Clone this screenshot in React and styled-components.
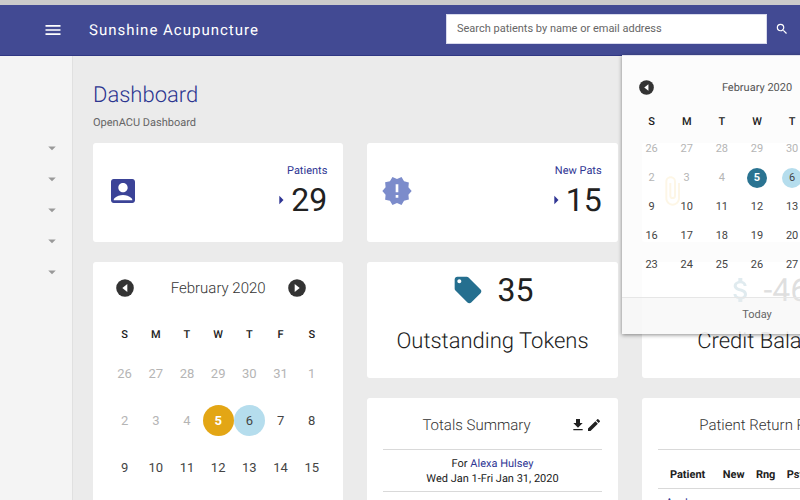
import React from "react";
import styled, { createGlobalStyle, css } from "styled-components";
import {
  MdAccountBox,
  MdArrowDropDown,
  MdArrowRight,
  MdAttachFile,
  MdAttachMoney,
  MdEdit,
  MdFileDownload,
  MdLocalOffer,
  MdMenu,
  MdNewReleases,
  MdSearch,
} from "react-icons/md";

const GlobalStyle = createGlobalStyle`
  * {
    box-sizing: border-box;
  }

  body {
    margin: 0;
    background: #ebebeb;
    color: #212121;
    font-family: Roboto, "Liberation Sans", sans-serif;
    font-size: 11px;
    text-rendering: geometricPrecision;
  }

  button {
    padding: 0;
    border: 0;
    background: none;
    color: inherit;
    font: inherit;
    cursor: pointer;
  }

  a {
    color: #303694;
    text-decoration: none;
  }

  svg {
    display: block;
  }
`;

const Viewport = styled.div`
  height: 100vh;
  overflow: hidden;
`;

const Page = styled.div`
  display: flex;
  flex-direction: column;
  min-width: 912px;
  min-height: 100%;
`;

const TopBar = styled.header`
  position: relative;
  z-index: 1;
  display: flex;
  align-items: center;
  height: 56px;
  padding-left: 43px;
  border-top: 5px solid #cbcbcb;
  border-bottom: 1px solid #303783;
  background: #424a93;
  color: #fff;
`;

const Brand = styled.div`
  flex: 0 0 357px;
  margin-left: 26px;
  font-size: 15px;
  letter-spacing: 1px;
`;

const SearchForm = styled.form`
  display: flex;
  align-items: center;
  gap: 8px;
  padding-bottom: 2px;
`;

const SearchInput = styled.input`
  width: 321px;
  height: 30px;
  margin: 0;
  padding: 0 10px 2px;
  border: 1px solid #d8daec;
  background: #fff;
  font-family: inherit;
  font-size: 11px;

  &::placeholder {
    color: #666;
  }
`;

const Body = styled.div`
  display: flex;
  flex: 1;
`;

const Sidebar = styled.nav`
  display: flex;
  flex: 0 0 73px;
  flex-direction: column;
  align-items: flex-end;
  padding: 76px 11px 0 0;
  border-right: 1px solid #e0e0e0;
  background: #f4f4f4;
  color: #999;
`;

const SidebarToggle = styled.button`
  display: flex;
  align-items: center;
  height: 31px;
`;

const Main = styled.main`
  flex: 1;
  padding: 24px 20px 0;
`;

const Title = styled.h1`
  margin: 0;
  color: #2c3590;
  font-size: 22px;
  font-weight: 300;
  line-height: 32px;
`;

const Subtitle = styled.p`
  margin: 3px 0 12px;
  color: #666;
  line-height: 16px;
`;

const Grid = styled.div`
  display: grid;
  grid-template-columns: repeat(3, minmax(250px, 1fr));
  grid-template-rows: 99px 116px auto;
  column-gap: 24px;
  row-gap: 20px;
`;

const Card = styled.section`
  border-radius: 3px;
  background: #fff;
`;

const StatCard = styled(Card)`
  display: flex;
  align-items: center;
  justify-content: space-between;
  padding: 0 16px 4px 14px;
`;

const StatIcon = styled.span`
  color: ${(p) => p.$color};
`;

const StatInfo = styled.div`
  padding-bottom: 2px;
  color: #303694;
  text-align: right;
`;

const StatLabel = styled.a`
  display: block;
  line-height: 20px;
`;

const StatValue = styled.div`
  display: flex;
  align-items: center;
  justify-content: flex-end;
  line-height: 38px;
`;

const BigNumber = styled.span`
  color: #212121;
  font-size: 32px;
`;

const TotalCard = styled(Card)`
  padding-top: 8px;
  text-align: center;
`;

const TotalValue = styled.div`
  display: flex;
  align-items: center;
  justify-content: center;
  gap: ${(p) => p.$gap}px;
  color: #256f8f;
  line-height: 40px;
`;

const TotalLabel = styled.h2`
  margin: 16px 0 0;
  font-size: 22px;
  font-weight: 300;
  line-height: 32px;
`;

const CalendarCard = styled(Card)`
  grid-row: span 2;
  padding: 8px 16px 24px;
`;

const small = css`
  height: 29px;
  font-size: 11px;
`;

const regular = css`
  height: 47px;
  font-size: 13px;
`;

const CalendarHead = styled.div`
  display: grid;
  grid-template-columns: 46px 1fr 46px;
  align-items: center;
  height: ${(p) => (p.$small ? 42 : 36)}px;
  margin-bottom: ${(p) => (p.$small ? 1 : 12)}px;
  color: ${(p) => (p.$small ? "#555" : "#333")};
  font-size: ${(p) => (p.$small ? 11 : 15)}px;
  font-weight: ${(p) => (p.$small ? 400 : 300)};
  text-align: center;
`;

const CalendarArrow = styled.button`
  width: ${(p) => p.$size}px;
  height: ${(p) => p.$size}px;
  margin-left: ${(p) => (p.$size > 16 ? 7 : 5)}px;
  color: #333;
`;

const CalendarTable = styled.table`
  width: 100%;
  border-collapse: collapse;
  table-layout: fixed;

  th {
    height: ${(p) => (p.$small ? 25 : 32)}px;
    padding: 0;
    font-size: 11px;
    font-weight: 500;
  }

  td {
    padding: 0;
    text-align: center;
    ${(p) => (p.$small ? small : regular)}
  }
`;

const Day = styled.button`
  width: ${(p) => (p.$small ? 20 : 31)}px;
  height: ${(p) => (p.$small ? 20 : 31)}px;
  border-radius: 50%;
  background: ${(p) => p.$fill || "transparent"};
  color: ${(p) => (p.$muted ? "#b5b5b5" : "#444")};

  ${(p) =>
    p.$today &&
    css`
      color: #fff;
      font-weight: 700;
    `}
`;

const Popover = styled.div`
  position: absolute;
  top: 100%;
  right: 20px;
  width: 270px;
  background: rgba(255, 255, 255, 0.86);
  box-shadow: 0 1px 4px rgba(0, 0, 0, 0.45);
  color: #212121;
`;

const PopoverBody = styled.div`
  padding: 11px 12px 18px;
`;

const TodayButton = styled.button`
  display: block;
  width: 100%;
  height: 37px;
  padding-bottom: 4px;
  border-top: 1px solid #e6e6e6;
  background: rgba(235, 235, 235, 0.3);
  color: #666;
`;

const ReportCard = styled(Card)`
  padding: 6px 16px 0;
`;

const ReportHead = styled.div`
  display: flex;
  align-items: center;
  height: 46px;
  padding-bottom: 4px;
  border-bottom: 1px solid #d9d9d9;
`;

const ReportTitle = styled.h3`
  flex: 1;
  margin: 0;
  color: #333;
  font-size: 15px;
  font-weight: 300;
  text-align: center;
`;

const ReportActions = styled.div`
  display: flex;
`;

const ReportPeriod = styled.p`
  margin: 0;
  padding: 6px 0 5px;
  border-bottom: 1px solid #d9d9d9;
  line-height: 15px;
  text-align: center;
`;

const ReportTable = styled.table`
  width: 100%;
  border-collapse: collapse;
  table-layout: fixed;

  td {
    height: 28px;
    padding: 0 0 0 8px;
  }
`;

const ReportColumn = styled.th`
  width: ${(p) => p.$width};
  height: 38px;
  padding: ${(p) => (p.$width ? "12px 0 0" : "12px 0 0 5px")};
  border-bottom: 1px solid #d9d9d9;
  font-weight: 700;
  text-align: ${(p) => (p.$width ? "center" : "left")};
`;

const WEEKDAYS = ["S", "M", "T", "W", "T", "F", "S"];

const WEEKS = [
  [26, 27, 28, 29, 30, 31, 1],
  [2, 3, 4, 5, 6, 7, 8],
  [9, 10, 11, 12, 13, 14, 15],
  [16, 17, 18, 19, 20, 21, 22],
  [23, 24, 25, 26, 27, 28, 29],
];

const TODAY = 5;
const NEXT_VISIT = 6;

const ArrowIcon = ({ flip }) => (
  <svg viewBox="0 0 18 18" width="100%" height="100%" aria-hidden="true">
    <circle cx="9" cy="9" r="8.8" fill="currentColor" />
    <path
      d="M11.3 5v8L6.3 9z"
      fill="#fff"
      transform={flip ? "rotate(180 9 9)" : undefined}
    />
  </svg>
);

const Calendar = ({ small, todayColor }) => {
  const fillFor = (week, day) => {
    if (week !== 1) return undefined;
    if (day === TODAY) return todayColor;
    return day === NEXT_VISIT ? "#b5dded" : undefined;
  };

  return (
    <>
      <CalendarHead $small={small}>
        <CalendarArrow $size={small ? 15 : 18} aria-label="Previous month">
          <ArrowIcon />
        </CalendarArrow>
        <span>February 2020</span>
        <CalendarArrow $size={small ? 15 : 18} aria-label="Next month">
          <ArrowIcon flip />
        </CalendarArrow>
      </CalendarHead>
      <CalendarTable $small={small}>
        <thead>
          <tr>
            {WEEKDAYS.map((name, i) => (
              <th key={i}>{name}</th>
            ))}
          </tr>
        </thead>
        <tbody>
          {WEEKS.map((days, week) => (
            <tr key={week}>
              {days.map((day) => (
                <td key={day}>
                  <Day
                    $small={small}
                    $muted={week === 0 || (week === 1 && day < TODAY)}
                    $today={week === 1 && day === TODAY}
                    $fill={fillFor(week, day)}
                  >
                    {day}
                  </Day>
                </td>
              ))}
            </tr>
          ))}
        </tbody>
      </CalendarTable>
    </>
  );
};

const Stat = ({ icon, color, label, value }) => (
  <StatCard>
    <StatIcon $color={color}>{icon}</StatIcon>
    {label && (
      <StatInfo>
        <StatLabel href="#">{label}</StatLabel>
        <StatValue>
          <MdArrowRight size={20} />
          <BigNumber>{value}</BigNumber>
        </StatValue>
      </StatInfo>
    )}
  </StatCard>
);

export default function App() {
  return (
    <Viewport>
      <GlobalStyle />
      <Page>
        <TopBar>
          <button aria-label="Menu">
            <MdMenu size={20} />
          </button>
          <Brand>Sunshine Acupuncture</Brand>
          <SearchForm>
            <SearchInput
              type="text"
              aria-label="Search patients"
              placeholder="Search patients by name or email address"
            />
            <button type="button" aria-label="Search">
              <MdSearch size={14} />
            </button>
          </SearchForm>
          <Popover>
            <PopoverBody>
              <Calendar small todayColor="#2a7391" />
            </PopoverBody>
            <TodayButton>Today</TodayButton>
          </Popover>
        </TopBar>
        <Body>
          <Sidebar>
            {[1, 2, 3, 4, 5].map((n) => (
              <SidebarToggle key={n} aria-label={`Expand section ${n}`}>
                <MdArrowDropDown size={18} />
              </SidebarToggle>
            ))}
          </Sidebar>
          <Main>
            <Title>Dashboard</Title>
            <Subtitle>OpenACU Dashboard</Subtitle>
            <Grid>
              <Stat
                icon={<MdAccountBox size={32} />}
                color="#3b4397"
                label="Patients"
                value="29"
              />
              <Stat
                icon={<MdNewReleases size={32} />}
                color="#7c8ccb"
                label="New Pats"
                value="15"
              />
              <Stat icon={<MdAttachFile size={32} />} color="#f2c14e" />
              <CalendarCard>
                <Calendar todayColor="#e3a615" />
              </CalendarCard>
              <TotalCard>
                <TotalValue $gap={14}>
                  <MdLocalOffer size={32} />
                  <BigNumber>35</BigNumber>
                </TotalValue>
                <TotalLabel>Outstanding Tokens</TotalLabel>
              </TotalCard>
              <TotalCard>
                <TotalValue $gap={6}>
                  <MdAttachMoney size={32} />
                  <BigNumber>-46</BigNumber>
                </TotalValue>
                <TotalLabel>Credit Balance</TotalLabel>
              </TotalCard>
              <ReportCard>
                <ReportHead>
                  <ReportTitle>Totals Summary</ReportTitle>
                  <ReportActions>
                    <button aria-label="Download">
                      <MdFileDownload size={16} />
                    </button>
                    <button aria-label="Edit">
                      <MdEdit size={16} />
                    </button>
                  </ReportActions>
                </ReportHead>
                <ReportPeriod>
                  For <a href="#">Alexa Hulsey</a>
                  <br />
                  Wed Jan 1-Fri Jan 31, 2020
                </ReportPeriod>
              </ReportCard>
              <ReportCard>
                <ReportHead>
                  <ReportTitle>Patient Return Rates</ReportTitle>
                </ReportHead>
                <ReportTable>
                  <thead>
                    <tr>
                      <ReportColumn $width="60px">Patient</ReportColumn>
                      <ReportColumn $width="32px">New</ReportColumn>
                      <ReportColumn $width="32px">Rng</ReportColumn>
                      <ReportColumn>Pst</ReportColumn>
                    </tr>
                  </thead>
                  <tbody>
                    <tr>
                      <td>
                        <a href="#">AnaLee</a>
                      </td>
                    </tr>
                  </tbody>
                </ReportTable>
              </ReportCard>
            </Grid>
          </Main>
        </Body>
      </Page>
    </Viewport>
  );
}
